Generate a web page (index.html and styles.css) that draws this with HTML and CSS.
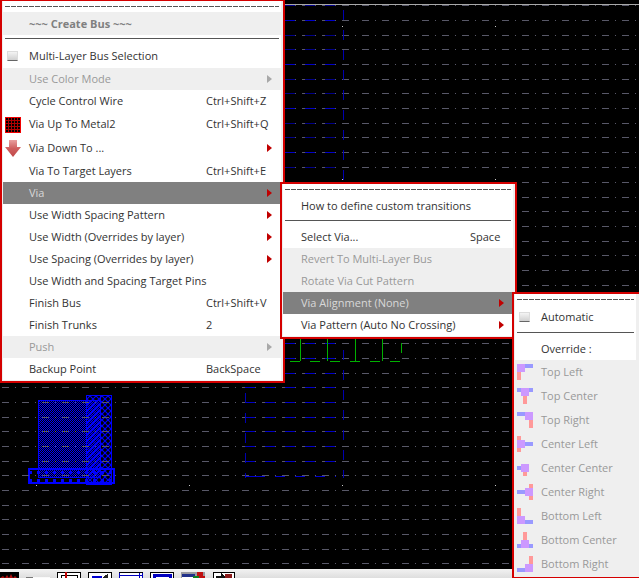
FILE: index.html
```html
<!DOCTYPE html>
<html lang="en">
<head>
    <meta charset="UTF-8">
    <meta name="viewport" content="width=device-width, initial-scale=1.0">
    <title>Create Bus</title>
    <link rel="stylesheet" href="styles.css">
</head>
<body>
    <svg class="canvas" width="639" height="569" shape-rendering="crispEdges">
        <defs>
            <pattern id="gridTop" width="20" height="44" patternUnits="userSpaceOnUse">
                <path d="M2 5h7v1H2zM15 5h1v1h-1zM2 20h7v1H2zM15 20h1v1h-1zM2 35h7v1H2zM15 35h1v1h-1z" fill="#585868"/>
            </pattern>
            <pattern id="gridLow" width="20" height="44" patternUnits="userSpaceOnUse">
                <path d="M2 6h7v1H2zM15 6h1v1h-1zM2 21h7v1H2zM15 21h1v1h-1zM2 35h7v1H2zM15 35h1v1h-1z" fill="#585868"/>
            </pattern>
            <pattern id="blueTop" width="20" height="44" patternUnits="userSpaceOnUse">
                <path d="M5 20h10v1H5z" fill="#0000c8"/>
                <path d="M5 5h10v1H5zM5 35h10v1H5z" fill="#000088"/>
            </pattern>
            <pattern id="blueLow" width="20" height="44" patternUnits="userSpaceOnUse">
                <path d="M5 6h10v1H5zM5 21h10v1H5zM5 35h10v1H5z" fill="#0000c8"/>
            </pattern>
            <pattern id="dense" width="2" height="2" patternUnits="userSpaceOnUse">
                <path d="M0 0h1v1H0zM1 1h1v1H1z" fill="#0000ff"/>
            </pattern>
            <pattern id="hatch" width="6" height="6" patternUnits="userSpaceOnUse">
                <path d="M0 0L6 6M6 0L0 6" stroke="#0000ff" stroke-width="1.2" shape-rendering="auto"/>
            </pattern>
            <pattern id="cuts" width="8" height="8" patternUnits="userSpaceOnUse" x="29" y="471">
                <rect x="0" y="0" width="3" height="3" fill="#0000ff"/>
            </pattern>
        </defs>

        <!-- shapes -->
        <rect x="86" y="395" width="25" height="89" fill="url(#hatch)" stroke="#0000ff"/>
        <rect x="38.5" y="400.5" width="62" height="77" fill="url(#dense)" stroke="#0000ff" stroke-width="1.5"/>
        <rect x="86.5" y="395.5" width="14" height="82" fill="none" stroke="#0000ff"/>
        <rect x="29" y="471" width="82" height="12" fill="url(#cuts)"/>
        <rect x="29" y="469" width="85" height="14" fill="none" stroke="#0000ff" stroke-width="2"/>

        <!-- grid -->
        <rect width="639" height="175" fill="url(#gridTop)"/>
        <rect y="175" width="639" height="394" fill="url(#gridLow)"/>
        <rect x="0" y="4" width="639" height="1" fill="#a8a8a8"/>

        <!-- wires -->
        <rect x="285" width="51" height="175" fill="url(#blueTop)"/>
        <rect x="285" y="340" width="51" height="40" fill="url(#blueLow)"/>
        <rect x="245" y="380" width="91" height="85" fill="url(#blueLow)"/>
        <path d="M343.5 10V180M343.5 350V478M245.5 393V478" stroke="#0000b0" stroke-dasharray="10 10" fill="none"/>
        <path d="M255 476.5H336" stroke="#0000d0" stroke-dasharray="10 10" fill="none"/>
        <path d="M245 476.5H255" stroke="#0000d0"/>
        <path d="M290 361.5H400" stroke="#00b000" stroke-dasharray="10 10" fill="none"/>
        <path d="M300.5 338V361M327.5 338V361M355.5 338V361M382.5 338V361M401.5 343V353" stroke="#00b000" fill="none"/>

        <!-- origin marks -->
        <path d="M342 26h1v1h-1zM495 26h1v1h-1zM342 179h1v1h-1zM495 179h1v1h-1zM36 485h1v1h-1zM189 485h1v1h-1zM342 485h1v1h-1zM495 485h1v1h-1z" fill="#c8c8c8"/>
    </svg>

    <div class="toolbar">
        <svg class="tool first" width="19" height="24"><rect width="19" height="24" fill="#000"/><path d="M0 6l3-2 2 2 2-3 2 3 2-4 2 4 2-2 2 2v4H0z" fill="#b01010"/></svg>
        <svg class="tool" width="24" height="24"><rect y="5" width="7" height="3" fill="#777"/><rect x="7" y="5" width="17" height="3" fill="#fafafa"/></svg>
        <svg class="tool" width="24" height="24" shape-rendering="crispEdges"><rect x=".5" y=".5" width="23" height="23" fill="#fff" stroke="#000"/><rect x="4.500" y="3.500" width="16" height="12" fill="none" stroke="#000"/><rect x="8" y="0" width="2" height="8" fill="#c00000"/></svg>
        <svg class="tool" width="24" height="24" shape-rendering="crispEdges"><rect x=".5" y=".5" width="23" height="23" fill="#fff" stroke="#000"/><rect x="4" y="4" width="10" height="3" fill="#0000d0"/><path d="M15 5l5-3v7h-5z" fill="#222"/></svg>
        <svg class="tool" width="24" height="24" shape-rendering="crispEdges"><rect x=".5" y=".5" width="23" height="23" fill="#fff" stroke="#0000c0"/><rect x="0" y="3" width="24" height="1" fill="#0000c0"/><rect x="20" y="0" width="1" height="24" fill="#0000c0"/><rect x="0" y="0" width="24" height="1" fill="#000"/></svg>
        <svg class="tool" width="24" height="24" shape-rendering="crispEdges"><rect x=".5" y=".5" width="23" height="23" fill="#fff" stroke="#000"/><rect x="4" y="3" width="16" height="16" fill="none" stroke="#0000c0" stroke-width="3"/></svg>
        <svg class="tool" width="24" height="24" shape-rendering="crispEdges"><rect width="24" height="24" fill="#9a9aa0"/><rect x="1" y="2" width="13" height="3" fill="#20308a"/><rect x="1" y="5" width="14" height="3" fill="#fff"/><rect x="16" y="0" width="6" height="4" fill="#c01010"/><rect x="18" y="4" width="6" height="4" fill="#c01010"/><rect x="12" y="4" width="6" height="4" fill="#108020"/></svg>
        <svg class="tool last" width="22" height="24" shape-rendering="crispEdges"><rect x=".5" y=".5" width="21" height="23" fill="#fff" stroke="#000"/><path d="M3 4h5V1l4 4-1 2H3z" fill="#111"/><rect x="12" y="2" width="7" height="6" fill="#8b1a1a"/></svg>
    </div>

    <div class="menu menu-bus">
        <div class="tearoff"></div>
        <div class="item title"><span class="slot"></span><span class="label">~~~ Create Bus ~~~</span></div>
        <div class="sep"></div>
        <div class="item tall"><span class="slot"><span class="check"></span></span><span class="label">Multi-Layer Bus Selection</span></div>
        <div class="item off"><span class="slot"></span><span class="label">Use Color Mode</span><span class="arrow"></span></div>
        <div class="item h23"><span class="slot"></span><span class="label">Cycle Control Wire</span><span class="key">Ctrl+Shift+Z</span></div>
        <div class="item h23"><span class="slot">
            <svg width="16" height="16" shape-rendering="crispEdges"><defs><pattern id="viaDots" width="3" height="3" patternUnits="userSpaceOnUse"><rect width="3" height="3" fill="#b00000"/><rect x="1" y="1" width="2" height="2" fill="#000"/></pattern></defs><rect x=".5" y=".5" width="15" height="15" fill="url(#viaDots)" stroke="#f00000"/></svg>
        </span><span class="label">Via Up To Metal2</span><span class="key">Ctrl+Shift+Q</span></div>
        <div class="item tall"><span class="slot">
            <svg width="16" height="17"><defs><linearGradient id="downFill" x1="0" y1="0" x2="0" y2="1"><stop offset="0" stop-color="#e9a0a0"/><stop offset=".5" stop-color="#cf5f5f"/><stop offset="1" stop-color="#c04848"/></linearGradient></defs><path d="M4 0h8v7h4L8 17 0 7h4z" fill="url(#downFill)"/></svg>
        </span><span class="label">Via Down To ...</span><span class="arrow"></span></div>
        <div class="item"><span class="slot"></span><span class="label">Via To Target Layers</span><span class="key">Ctrl+Shift+E</span></div>
        <div class="item on"><span class="slot"></span><span class="label">Via</span><span class="arrow"></span></div>
        <div class="item"><span class="slot"></span><span class="label">Use Width Spacing Pattern</span><span class="arrow"></span></div>
        <div class="item"><span class="slot"></span><span class="label">Use Width (Overrides by layer)</span><span class="arrow"></span></div>
        <div class="item"><span class="slot"></span><span class="label">Use Spacing (Overrides by layer)</span><span class="arrow"></span></div>
        <div class="item"><span class="slot"></span><span class="label">Use Width and Spacing Target Pins</span></div>
        <div class="item"><span class="slot"></span><span class="label">Finish Bus</span><span class="key">Ctrl+Shift+V</span></div>
        <div class="item"><span class="slot"></span><span class="label">Finish Trunks</span><span class="key">2</span></div>
        <div class="item off"><span class="slot"></span><span class="label">Push</span><span class="arrow"></span></div>
        <div class="item"><span class="slot"></span><span class="label">Backup Point</span><span class="key">BackSpace</span></div>
    </div>

    <div class="menu menu-via">
        <div class="tearoff"></div>
        <div class="item"><span class="label">How to define custom transitions</span></div>
        <div class="sep"></div>
        <div class="item"><span class="label">Select Via...</span><span class="key">Space</span></div>
        <div class="item off"><span class="label">Revert To Multi-Layer Bus</span></div>
        <div class="item off"><span class="label">Rotate Via Cut Pattern</span></div>
        <div class="item on"><span class="label">Via Alignment (None)</span><span class="arrow"></span></div>
        <div class="item"><span class="label">Via Pattern (Auto No Crossing)</span><span class="arrow"></span></div>
    </div>

    <div class="menu menu-align">
        <div class="tearoff"></div>
        <div class="item tall"><span class="slot"><span class="check"></span></span><span class="label">Automatic</span></div>
        <div class="sep"></div>
        <div class="item"><span class="slot"></span><span class="label">Override :</span></div>
        <div class="item off row24"><span class="slot"><svg class="align" width="16" height="16"><rect class="via" width="8" height="8"/><rect class="met" x="8" width="8" height="4"/><rect class="pin" y="8" width="4" height="8"/></svg></span><span class="label">Top Left</span></div>
        <div class="item off row24"><span class="slot"><svg class="align" width="16" height="16"><rect class="met" width="16" height="4"/><rect class="via" x="4" width="8" height="8"/><rect class="pin" x="6" y="8" width="4" height="8"/></svg></span><span class="label">Top Center</span></div>
        <div class="item off row24"><span class="slot"><svg class="align" width="16" height="16"><rect class="met" width="8" height="4"/><rect class="via" x="8" width="8" height="8"/><rect class="pin" x="12" y="8" width="4" height="8"/></svg></span><span class="label">Top Right</span></div>
        <div class="item off row24"><span class="slot"><svg class="align" width="16" height="16"><rect class="pin" width="4" height="16"/><rect class="via" y="4" width="8" height="8"/><rect class="met" x="8" y="6" width="8" height="4"/></svg></span><span class="label">Center Left</span></div>
        <div class="item off row24"><span class="slot"><svg class="align" width="16" height="16"><rect class="met" y="6" width="4" height="4"/><rect class="via" x="4" y="4" width="8" height="8"/><rect class="pin" x="6" y="12" width="4" height="4"/></svg></span><span class="label">Center Center</span></div>
        <div class="item off row24"><span class="slot"><svg class="align" width="16" height="16"><rect class="pin" x="12" width="4" height="16"/><rect class="via" x="8" y="4" width="8" height="8"/><rect class="met" y="6" width="8" height="4"/></svg></span><span class="label">Center Right</span></div>
        <div class="item off row24"><span class="slot"><svg class="align" width="16" height="16"><rect class="pin" width="4" height="8"/><rect class="via" y="8" width="8" height="8"/><rect class="met" x="8" y="12" width="8" height="4"/></svg></span><span class="label">Bottom Left</span></div>
        <div class="item off row24"><span class="slot"><svg class="align" width="16" height="16"><rect class="pin" x="6" width="4" height="8"/><rect class="met" y="12" width="16" height="4"/><rect class="via" x="4" y="8" width="8" height="8"/></svg></span><span class="label">Bottom Center</span></div>
        <div class="item off row24"><span class="slot"><svg class="align" width="16" height="16"><rect class="pin" x="12" width="4" height="8"/><rect class="via" x="8" y="8" width="8" height="8"/><rect class="met" y="12" width="8" height="4"/></svg></span><span class="label">Bottom Right</span></div>
    </div>
</body>
</html>
```
FILE: styles.css
```css
* {
    box-sizing: border-box;
}
body {
    margin: 0;
    height: 100vh;
    overflow: hidden;
    background: #000;
    display: flex;
    flex-direction: column;
    font-family: 'Open Sans', sans-serif;
    font-size: 11px;
    color: #333;
}
.canvas {
    display: block;
    flex: none;
}
.toolbar {
    flex: none;
    height: 9px;
    padding-top: 3px;
    display: flex;
    gap: 7px;
    overflow: hidden;
    background: linear-gradient(#f2f2f2, #dedede);
}
.tool {
    flex: none;
    display: block;
}
.tool.last {
    margin-left: 1px;
}
.menu {
    position: absolute;
    background: #efefef;
    border: 2px solid #d40000;
    padding: 0 2px 1px 1px;
}
.menu-bus {
    left: 0;
    top: -1px;
    width: 285px;
}
.menu-via {
    left: 280px;
    top: 182px;
    width: 237px;
}
.menu-align {
    left: 512px;
    top: 292px;
    width: 131px;
    padding-right: 5px;
}
.tearoff {
    height: 11px;
    background: repeating-linear-gradient(90deg, #555 0 5px, transparent 5px 6px) no-repeat center / calc(100% - 4px) 1px, #fff;
}
.sep {
    height: 9px;
    padding: 3px 2px 0;
    background: #fff;
}
.sep::before {
    content: "";
    display: block;
    height: 1px;
    background: #555;
}
.item {
    display: flex;
    align-items: center;
    height: 22px;
    background: #fff;
    white-space: nowrap;
}
.item.tall {
    height: 24px;
}
.item.h23 {
    height: 23px;
}
.item.row24 {
    height: 24px;
}
.item.title {
    height: 23px;
    background: #efefef;
    color: #808080;
    font-weight: 700;
}
.item.off {
    background: transparent;
    color: #999;
}
.item.on {
    background: #808080;
    color: #d8d8d8;
}
.slot {
    flex: none;
    width: 26px;
    padding-left: 2px;
    display: flex;
    align-items: center;
}
.slot svg {
    display: block;
}
.label,
.key {
    padding-bottom: 2px;
}
.title .label {
    padding-bottom: 0;
}
.label {
    flex: 1;
}
.key {
    flex: none;
    width: 75px;
}
.menu-via .label {
    padding-left: 18px;
}
.menu-via .key {
    width: 43px;
}
.check {
    display: block;
    width: 11px;
    height: 10px;
    margin-left: 2px;
    background: linear-gradient(#f4f4f4, #d0d0d0);
    border: 1px solid #dcdcdc;
    border-bottom-color: #666;
}
.arrow {
    flex: none;
    margin-right: 9px;
    border-left: 5px solid #c00000;
    border-top: 4px solid transparent;
    border-bottom: 4px solid transparent;
}
.off .arrow {
    border-left-color: #a8a8a8;
}
.align {
    shape-rendering: crispEdges;
}
.via {
    fill: #cc99ff;
}
.met {
    fill: #9999ff;
}
.pin {
    fill: #ff9999;
}
```
